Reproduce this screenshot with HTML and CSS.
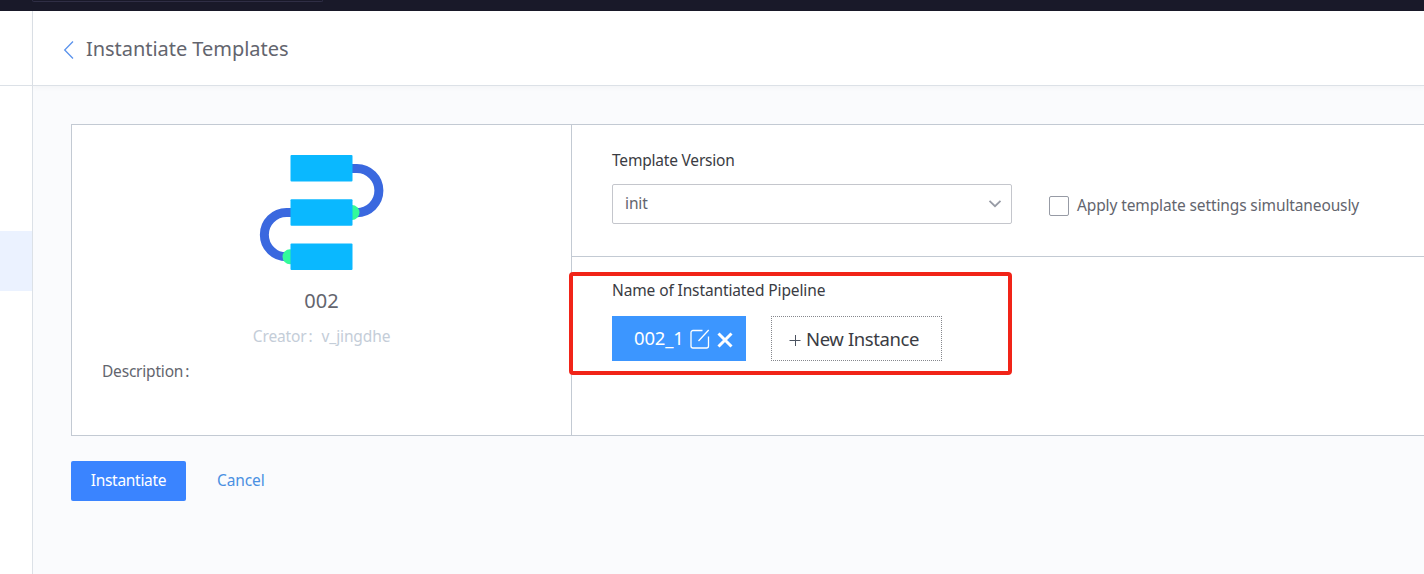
FILE: index.html
```html
<!DOCTYPE html>
<html lang="en">
<head>
<meta charset="utf-8">
<title>Instantiate Templates</title>
<link rel="stylesheet" href="styles.css">
</head>
<body>
<div class="topbar"><div class="topbar-search"></div></div>
<div class="shell">
  <nav class="sidebar">
    <div class="sidebar-head"></div>
    <div class="sidebar-active"></div>
  </nav>
  <main class="main">
    <header class="header">
      <svg class="back" width="12" height="20" viewBox="0 0 12 20"><path d="M10 1.5 1.7 10 10 18.5" fill="none" stroke="#5b93ec" stroke-width="1.3"/></svg>
      <h1 class="title">Instantiate Templates</h1>
    </header>
    <section class="content">
      <div class="card">
        <aside class="info">
          <svg class="logo" width="126" height="118" viewBox="0 0 126 118">
            <g fill="none" stroke="#3a68df" stroke-width="9">
              <path d="M93 14.500h4.800a22.100 22.100 0 0 1 0 44.200H93"/>
              <path d="M32 58.500h-4.500a22 22 0 0 0 0 44.300H32"/>
            </g>
            <circle cx="93" cy="58.500" r="7.500" fill="#33fa9b"/>
            <circle cx="31" cy="102.700" r="7.500" fill="#33fa9b"/>
            <g fill="#0ab8ff">
              <rect x="31.500" y="1" width="62" height="26.500" rx="1"/>
              <rect x="31.500" y="45.200" width="62" height="26.500" rx="1"/>
              <rect x="31.500" y="89.500" width="62" height="26.500" rx="1"/>
            </g>
          </svg>
          <div class="name">002</div>
          <div class="creator"><span>Creator</span><span class="colon">:</span><span>v_jingdhe</span></div>
          <div class="description">Description<span class="colon">:</span></div>
        </aside>
        <div class="settings">
          <div class="version">
            <div class="label label-version">Template Version</div>
            <div class="version-row">
              <div class="select"><span class="select-value">init</span>
                <svg width="14" height="10" viewBox="0 0 14 10"><path d="M1.500 1.800 7 7.200l5.500-5.400" fill="none" stroke="#979ba5" stroke-width="1.800"/></svg>
              </div>
              <label class="check"><span class="box"></span><span class="check-text">Apply template settings simultaneously</span></label>
            </div>
          </div>
          <div class="pipelines">
            <div class="label label-name">Name of Instantiated Pipeline</div>
            <div class="pipeline-row">
              <div class="instance">
                <span class="instance-name">002_1</span>
                <svg class="edit" width="20" height="20" viewBox="0 0 20 20"><path d="M12.500 1.500H3A2 2 0 0 0 1 3.500V17a2 2 0 0 0 2 2h13.500a2 2 0 0 0 2-2V7.500M8.500 12 18.700 1" fill="none" stroke="#fff" stroke-width="1.300"/></svg>
                <svg class="close" width="16" height="16" viewBox="0 0 16 16"><path d="M1.500 1.500l13 13M14.500 1.500l-13 13" fill="none" stroke="#fff" stroke-width="3"/></svg>
              </div>
              <div class="new-instance">
                <svg class="plus" width="12" height="12" viewBox="0 0 12 12"><path d="M.500 6.500h11M6.500 1v11" fill="none" stroke="#4c5360" stroke-width="1"/></svg>
                <span class="new-text">New Instance</span>
              </div>
            </div>
            <div class="highlight"></div>
          </div>
        </div>
      </div>
      <div class="actions">
        <button class="primary">Instantiate</button>
        <a class="cancel">Cancel</a>
      </div>
    </section>
  </main>
</div>
</body>
</html>
```
FILE: styles.css
```css
* { box-sizing: border-box; }
body {
  margin: 0;
  height: 574px;
  overflow: hidden;
  background: #fafbfd;
  color: #63656e;
  font: 15.5px/20px "Noto Sans", "Open Sans", sans-serif;
  letter-spacing: -.12px;
}
.topbar { height: 11px; padding-left: 32px; background: #191929; }
.topbar-search {
  width: 291px;
  height: 2px;
  border: 1px solid #2f2e45;
  border-top: 0;
  border-radius: 0 0 2px 2px;
}
.shell { display: flex; height: 563px; }
.sidebar { flex: none; width: 33px; background: #fff; border-right: 1px solid #dce1e7; }
.sidebar-head { height: 75px; border-bottom: 1px solid #dce1e7; }
.sidebar-active { height: 60px; margin-top: 145px; background: #ebf2ff; }
.main { flex: 1; min-width: 0; }
.header {
  display: flex;
  align-items: center;
  gap: 11px;
  height: 75px;
  padding: 0 0 0 30px;
  background: #fff;
  border-bottom: 1px solid #dce1e7;
  box-shadow: 0 2px 5px rgba(0, 0, 0, .03);
}
.back { margin-top: 4px; }
.title {
  margin: 2px 0 0;
  font-size: 20px;
  font-weight: 400;
  line-height: 28px;
  letter-spacing: -.04px;
  white-space: nowrap;
}
.content { padding: 38px 0 0 38px; }
.card {
  display: flex;
  width: 1400px;
  height: 312px;
  background: #fff;
  border: 1px solid #c3cad3;
}
.info {
  display: flex;
  flex-direction: column;
  align-items: center;
  flex: none;
  width: 500px;
  border-right: 1px solid #c3cad3;
  padding: 29px 30px 0;
}
.logo { flex: none; }
.name { margin-top: 15px; font-size: 20px; line-height: 28px; letter-spacing: 0; }
.creator { display: flex; margin-top: 11px; color: #c4cdd8; }
.creator .colon { width: 15px; padding-left: 2px; }
.description { align-self: flex-start; margin-top: 15px; letter-spacing: -.2px; }
.description .colon { padding-left: 2px; }
.settings { flex: 1; min-width: 0; }
.version { height: 132px; padding: 25px 0 0 40px; border-bottom: 1px solid #c3cad3; }
.label { color: #3a3c43; white-space: nowrap; }
.label-version { letter-spacing: -.2px; }
.version-row { display: flex; align-items: center; gap: 37px; margin-top: 14px; }
.select {
  display: flex;
  align-items: center;
  justify-content: space-between;
  width: 400px;
  height: 40px;
  padding: 0 9px 0 12px;
  border: 1px solid #c4c6cc;
  border-radius: 2px;
}
.select-value { margin-top: -2px; }
.check { display: flex; align-items: center; gap: 8px; margin-top: 4px; white-space: nowrap; }
.check-text { margin-top: -2px; }
.box { width: 20px; height: 20px; border: 1px solid #979ba5; border-radius: 2px; }
.pipelines { position: relative; padding: 23px 0 0 40px; }
.pipeline-row { display: flex; gap: 25px; margin-top: 16px; color: #3a3c43; font-size: 18.5px; }
.instance {
  display: flex;
  align-items: center;
  width: 134px;
  height: 45px;
  padding-left: 22px;
  background: #3c96ff;
  color: #fff;
}
.instance-name { width: 56px; margin-top: -2px; letter-spacing: -.2px; }
.close { margin: 3px 0 0 7px; }
.new-instance {
  display: flex;
  align-items: center;
  width: 171px;
  height: 45px;
  padding-left: 17px;
  border: 1px dotted #85878d;
}
.plus { margin: 3px 5px 0 0; }
.new-text { white-space: nowrap; letter-spacing: -.4px; }
.highlight {
  position: absolute;
  left: -3px;
  top: 15px;
  width: 443px;
  height: 103px;
  border: 4px solid #f12418;
  border-radius: 4px;
}
.actions { display: flex; align-items: center; gap: 31px; margin-top: 25px; }
.primary {
  width: 115px;
  height: 40px;
  padding: 0 0 2px;
  border: 0;
  border-radius: 2px;
  background: #3a84ff;
  color: #fff;
  font: inherit;
  letter-spacing: -.3px;
}
.cancel { margin-top: -2px; color: #4a90e2; }
```
